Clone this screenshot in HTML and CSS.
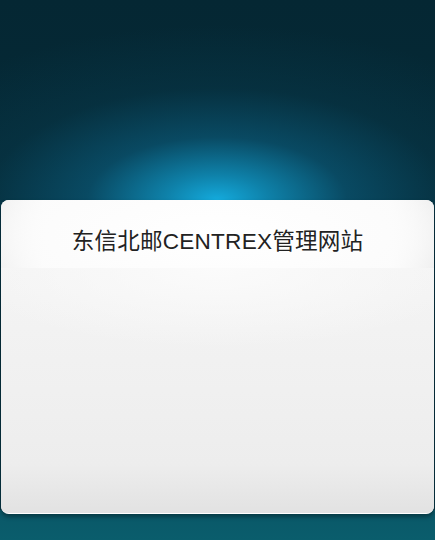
FILE: index.html
```html
<!DOCTYPE html>
<html lang="zh-CN">
<head>
<meta charset="utf-8">
<title>东信北邮CENTREX管理网站</title>
<link rel="stylesheet" href="styles.css">
</head>
<body>
<div class="page">
  <div class="card">
    <div class="card-head">
      <h1 class="title">东信北邮CENTREX管理网站</h1>
    </div>
    <div class="card-body"></div>
  </div>
</div>
</body>
</html>
```
FILE: styles.css
```css
html, body {
  margin: 0;
  padding: 0;
}
body {
  width: 435px;
  height: 540px;
  overflow: hidden;
  font-family: Arial, "Liberation Sans", "Noto Sans CJK SC", sans-serif;
  background:
    radial-gradient(ellipse 360px 175px at 217px 200px, rgba(20,170,220,1) 0%, rgba(16,145,190,0.85) 14%, rgba(12,100,135,0.55) 36%, rgba(9,68,90,0.28) 64%, rgba(6,42,54,0) 100%),
    linear-gradient(#052733 0%, #052b38 45%, #073746 100%);
}
.page {
  height: 540px;
  display: flex;
  flex-direction: column;
  padding-top: 200px;
  box-sizing: border-box;
  background: linear-gradient(to bottom, transparent 0, transparent 510px, #0a5868 510px, #0a5d6c 540px);
}
.card {
  margin: 0 1px 0 1px;
  height: 313px;
  border-radius: 8px;
  overflow: hidden;
  display: flex;
  flex-direction: column;
  border-bottom: 1px solid #ffffff;
  box-shadow: 0 3px 4px rgba(0,0,0,0.35);
  background: #efefef;
}
.card-head {
  height: 68px;
  flex: none;
  display: flex;
  align-items: center;
  justify-content: center;
  background:
    radial-gradient(ellipse 280px 90px at 217px 35px, #ffffff 0%, #fcfcfc 60%, rgba(245,245,245,0) 100%),
    linear-gradient(to right, #ececec 0%, #fafafa 10%, #fdfdfd 50%, #fafafa 90%, #e8e8e8 100%);
}
.title {
  margin: 0;
  padding-top: 11px;
  font-size: 22.6px;
  font-weight: normal;
  color: #222222;
  letter-spacing: 0.2px;
}
.card-body {
  flex: 1;
  background:
    radial-gradient(ellipse 260px 80px at 217px 0px, #fbfbfb 0%, rgba(247,247,247,0) 100%),
    linear-gradient(to bottom, #f4f4f4 0%, #f0f0f0 50%, #ededed 80%, #e2e2e2 100%);
}
```
